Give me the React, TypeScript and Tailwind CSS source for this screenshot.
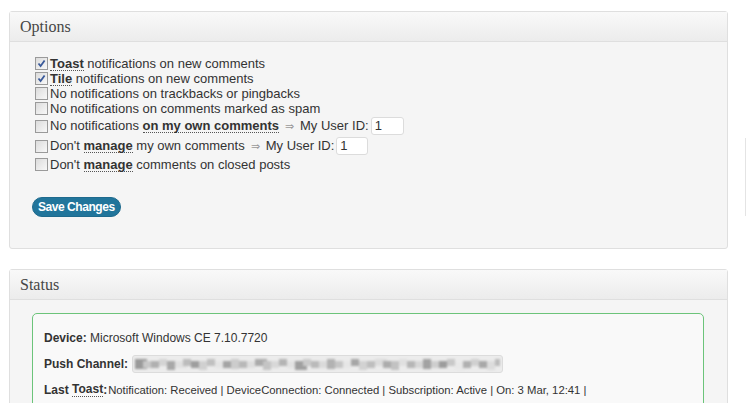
import React from "react"

const mosaic = [
  "#9a9a9a", "#c8c8c8", "#b0b0b0", "#d4d4d4", "#a8a8a8", "#e0e0e0", "#bcbcbc", "#9e9e9e",
  "#d0d0d0", "#c0c0c0", "#e4e4e4", "#a4a4a4", "#cccccc", "#b8b8b8", "#dedede", "#aaaaaa",
  "#c4c4c4", "#d8d8d8", "#b4b4b4", "#e2e2e2", "#a0a0a0", "#cacaca", "#bababa", "#dadada",
  "#b2b2b2", "#c6c6c6", "#e6e6e6", "#a6a6a6", "#d2d2d2", "#bebebe", "#dcdcdc", "#acacac",
  "#c2c2c2", "#e0e0e0", "#b6b6b6", "#d6d6d6", "#a2a2a2", "#cecece", "#9c9c9c", "#c8c8c8",
  "#e8e8e8", "#b0b0b0", "#d0d0d0", "#a8a8a8", "#dcdcdc", "#bcbcbc",
]

function Checkbox({ checked }: { checked?: boolean }) {
  return (
    <span className="inline-flex items-center justify-center w-[13px] h-[13px] border border-[#9a9a9a] bg-gradient-to-br from-[#dcdcdc] to-[#f8f8f8] mr-[2px] shrink-0">
      {checked && (
        <svg width="9" height="9" viewBox="0 0 9 9">
          <path d="M1.5 4.5 L3.6 7 L7.6 1.5" fill="none" stroke="#3a5a9a" strokeWidth="1.8" />
        </svg>
      )}
    </span>
  )
}

function Term({ children }: { children: React.ReactNode }) {
  return (
    <b className="font-bold text-[#333] border-b border-dotted border-[#555] leading-[13px]">
      {children}
    </b>
  )
}

function Arrow() {
  return <span className="text-[#999] text-[11px] mx-[6px]">⇒</span>
}

function UserId({ w }: { w: string }) {
  return (
    <span
      className={`inline-block ${w} h-[18px] bg-white border border-[#dcdcdc] rounded-[3px] text-[13px] leading-[16px] pl-[3px] ml-[2px]`}
    >
      1
    </span>
  )
}

function Panel({ title, children, className }: { title: string; children: React.ReactNode; className?: string }) {
  return (
    <div className={`mx-[9px] w-[719px] border border-[#dfdfdf] rounded-[3px] bg-[#f5f5f5] ${className ?? ""}`}>
      <div className="h-[30px] bg-gradient-to-b from-[#f9f9f9] to-[#ececec] border-b border-[#dfdfdf] pl-[10px] flex items-center">
        <span className="text-[16px] text-[#464646]" style={{ fontFamily: "'Liberation Serif', 'DejaVu Serif', serif" }}>
          {title}
        </span>
      </div>
      {children}
    </div>
  )
}

export default function App() {
  return (
    <div
      className="w-[747px] h-[403px] bg-white overflow-hidden pt-[11px] relative text-[#333] text-[13px]"
      style={{ fontFamily: "'Liberation Sans', Arial, sans-serif" }}
    >
      <div className="absolute left-[745px] top-[138px] w-px h-[78px] bg-[#e4e4e4]" />

      <Panel title="Options" className="h-[238px]">
        <div className="pl-[25px] pt-[14px]">
          <div className="flex items-center h-[15px]">
            <Checkbox checked />
            <Term>Toast</Term>&nbsp;notifications on new comments
          </div>
          <div className="flex items-center h-[15px]">
            <Checkbox checked />
            <Term>Tile</Term>&nbsp;notifications on new comments
          </div>
          <div className="flex items-center h-[15px]">
            <Checkbox />
            No notifications on trackbacks or pingbacks
          </div>
          <div className="flex items-center h-[15px]">
            <Checkbox />
            No notifications on comments marked as spam
          </div>
          <div className="flex items-center h-[20px]">
            <Checkbox />
            No notifications&nbsp;<Term>on my own comments</Term>
            <Arrow />
            My User ID:
            <UserId w="w-[33px]" />
          </div>
          <div className="flex items-center h-[20px]">
            <Checkbox />
            Don't&nbsp;<Term>manage</Term>&nbsp;my own comments
            <Arrow />
            My User ID:
            <UserId w="w-[32px]" />
          </div>
          <div className="flex items-center h-[17px]">
            <Checkbox />
            Don't&nbsp;<Term>manage</Term>&nbsp;comments on closed posts
          </div>
          <button className="mt-[24px] ml-[-3px] h-[20px] px-[5px] rounded-full bg-[#21759b] text-white font-bold text-[12px] tracking-[-0.45px] border border-[#1e6a8d] leading-[18px]">
            Save Changes
          </button>
        </div>
      </Panel>

      <Panel title="Status" className="mt-[20px] h-[200px]">
        <div className="ml-[22px] mt-[13px] w-[672px] h-[120px] border border-[#6cc47a] rounded-[5px] bg-[#f9f9f9] pl-[11px] pt-[15px] text-[12px]">
          <div className="h-[18px] flex items-center">
            <b className="font-bold">Device:</b>&nbsp;Microsoft Windows CE 7.10.7720
          </div>
          <div className="h-[18px] flex items-center mt-[8px]">
            <b className="font-bold">Push Channel:</b>
            <span className="ml-[4px] h-[18px] w-[371px] border border-[#dcdcdc] rounded-[3px] bg-[#ececec] flex items-center px-[2px] overflow-hidden">
              <svg width="365" height="12" className="blur-[1px]">
                {mosaic.map((c, i) => (
                  <rect key={i} x={i * 8} y={i % 3 === 0 ? 1 : 3} width={i % 5 === 0 ? 12 : 8} height={i % 4 === 0 ? 10 : 7} fill={c} />
                ))}
              </svg>
            </span>
          </div>
          <div className="h-[18px] flex items-center mt-[8px]">
            <b className="font-bold">Last&nbsp;</b>
            <Term>Toast</Term>
            <b className="font-bold">:</b>
            <span className="text-[11.3px] ml-[1px]">
              Notification: Received | DeviceConnection: Connected | Subscription: Active | On: 3 Mar, 12:41 |
            </span>
          </div>
        </div>
      </Panel>
    </div>
  )
}
